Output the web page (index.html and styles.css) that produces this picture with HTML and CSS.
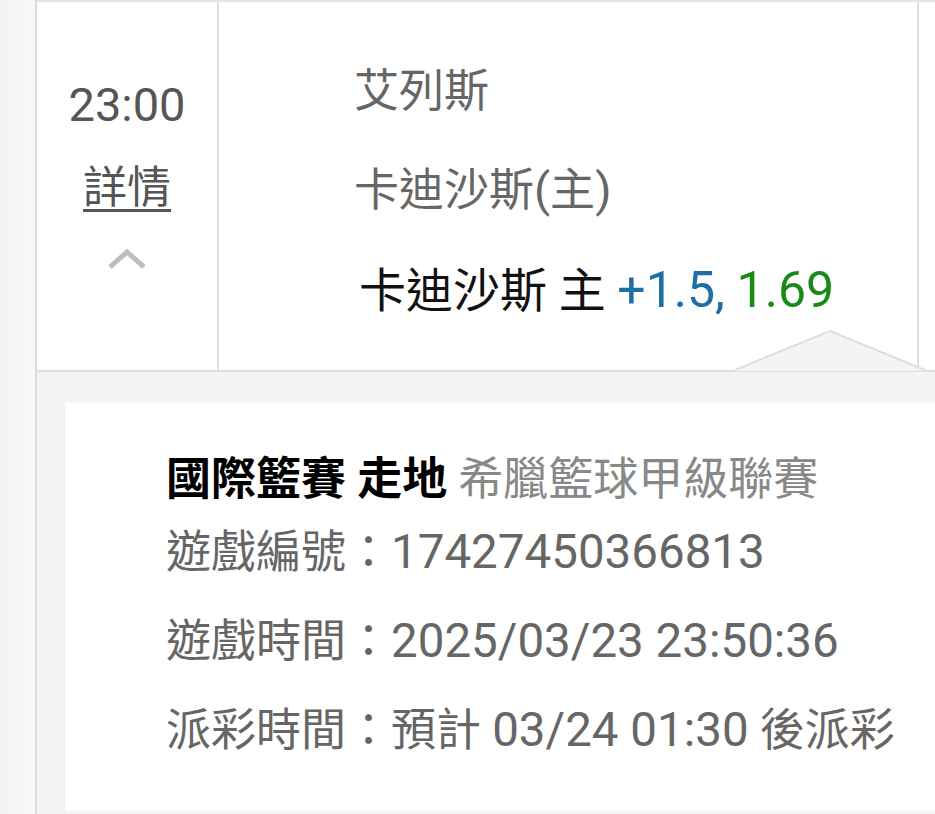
FILE: index.html
```html
<!DOCTYPE html>
<html lang="zh-Hant">
<head>
<meta charset="utf-8">
<link rel="stylesheet" href="styles.css">
</head>
<body>
<div class="page">
  <div class="gutter"></div>
  <div class="main">
    <div class="row">
      <div class="col-time">
        <div class="time">23:00</div>
        <a class="detail-link">詳情</a>
        <svg class="chevron" width="40" height="22" viewBox="0 0 40 22"><polyline points="3,19 20,4 37,19" fill="none" stroke="#bdbdbd" stroke-width="5"/></svg>
      </div>
      <div class="col-match">
        <div class="team away">艾列斯</div>
        <div class="team home">卡迪沙斯<span class="num">(</span>主<span class="num">)</span></div>
        <div class="bet">卡迪沙斯 主 <span class="hc">+1.5,</span> <span class="odds">1.69</span></div>
      </div>
      <div class="col-rest"></div>
      <svg class="notch" width="200" height="42" viewBox="0 0 200 42"><polygon points="0,41 95,2 190,41" fill="#f4f4f4"/><polyline points="0,40 95,1 190,40" fill="none" stroke="#dedede" stroke-width="2"/></svg>
    </div>
    <div class="panel">
      <div class="card">
        <div class="line head"><b>國際籃賽 走地</b> <span class="league">希臘籃球甲級聯賽</span></div>
        <div class="line">遊戲編號：<span class="num">17427450366813</span></div>
        <div class="line">遊戲時間：<span class="num">2025/03/23 23:50:36</span></div>
        <div class="line">派彩時間：預計 <span class="num">03/24 01:30</span> 後派彩</div>
      </div>
    </div>
  </div>
</div>
</body>
</html>
```
FILE: styles.css
```css
html, body {
  margin: 0;
  padding: 0;
  width: 935px;
  height: 814px;
  overflow: hidden;
  background: #f4f4f4;
  font-family: Roboto, "Noto Sans CJK TC", sans-serif;
}
.page {
  display: flex;
  height: 814px;
}
.gutter {
  width: 35px;
  flex: none;
  background: linear-gradient(to right, #f2f2f2, #f9f9f9);
}
.main {
  flex: 1;
  border-left: 2px solid #dcdcdc;
  display: flex;
  flex-direction: column;
  background: #f4f4f4;
}
.row {
  position: relative;
  display: flex;
  height: 368px;
  border-top: 2px solid #e3e3e3;
  border-bottom: 2px solid #dedede;
  background: #fff;
}
.col-time {
  width: 182px;
  flex: none;
  border-right: 2px solid #dedede;
  display: flex;
  flex-direction: column;
  align-items: center;
  padding-top: 76px;
  box-sizing: border-box;
}
.time {
  font-size: 47px;
  line-height: 54px;
  color: #555;
}
.detail-link {
  margin-top: 30px;
  font-size: 44px;
  line-height: 52px;
  color: #555;
  text-decoration: underline;
  text-decoration-thickness: 3px;
  text-underline-offset: 6px;
}
.chevron {
  margin-top: 34px;
}
.col-match {
  width: 700px;
  flex: none;
  border-right: 2px solid #dedede;
  padding-left: 135px;
  padding-top: 64px;
  box-sizing: border-box;
}
.team {
  font-size: 45px;
  line-height: 52px;
  color: #666;
}
.team .num {
  font-size: 47px;
}
.home {
  margin-top: 46px;
}
.bet {
  margin-top: 47px;
  margin-left: 5px;
  font-size: 47px;
  line-height: 52px;
  color: #111;
}
.hc { color: #1f6fa5; font-size: 50px; }
.odds { color: #178a17; font-size: 50px; }
.col-rest {
  flex: 1;
}
.notch {
  position: absolute;
  left: 698px;
  bottom: -2px;
}
.panel {
  flex: 1;
  padding: 31px 0 3px 29px;
}
.card {
  background: #fff;
  height: 100%;
  padding-left: 100px;
  padding-top: 47px;
  box-sizing: border-box;
}
.line {
  font-size: 45px;
  line-height: 60px;
  color: #666;
  margin-bottom: 28px;
  white-space: nowrap;
}
.line .num {
  font-size: 47.5px;
}
.line.head {
  margin-bottom: 12px;
}
.line b {
  color: #000;
  font-weight: 700;
}
.league {
  color: #888;
}
```
